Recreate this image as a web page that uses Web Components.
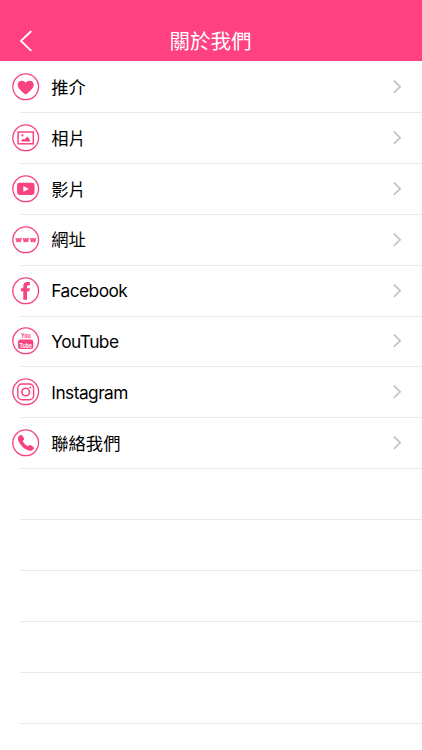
<!DOCTYPE html>
<html lang="zh-Hant">
<head>
<meta charset="utf-8">
<title>關於我們</title>
<style>
  body {
    margin: 0;
    background: #fff;
    font-family: Inter, "Noto Sans CJK TC", sans-serif;
  }
</style>
</head>
<body>
<about-page></about-page>

<script>
const ICONS = {
  heart: '<path fill="currentColor" d="M14 21.7C11.2 19.4 6 16.1 6 11.9C6 9.4 7.8 7.9 10 7.9C11.8 7.9 13.2 8.8 14 10.2C14.8 8.8 16.2 7.9 18 7.9C20.2 7.9 22 9.4 22 11.9C22 16.1 16.8 19.4 14 21.7Z"/>',
  photo: '<rect x="6.4" y="8.2" width="15.2" height="11.8" fill="none" stroke="currentColor" stroke-width="1.5"/><circle cx="10.8" cy="11.6" r="1.1" fill="currentColor"/><path fill="currentColor" d="M9.6 17.6V16.4L11.6 15L12.8 15.7L15.6 12.8L18.4 16.2V17.6Z"/>',
  video: '<rect x="5.4" y="7.9" width="17.4" height="12.2" rx="2.8" fill="currentColor"/><path fill="#fff" d="M11.7 11.2V17L17.2 14.1Z"/>',
  web: '<text x="3.9" y="16.1" font-family="DejaVu Sans, sans-serif" font-size="6.8" font-weight="700" letter-spacing=".9" stroke="currentColor" stroke-width=".35" fill="currentColor">www</text>',
  facebook: '<path fill="currentColor" d="M11.6 23V14.5H9.2V11.5H11.6V9.4C11.6 6.5 13.2 5.2 15.7 5.2H18.2V8.4H16.5C15.6 8.4 15.3 8.8 15.3 9.7V11.5H18.1L17.7 14.5H15.3V23Z"/>',
  youtube: '<g font-family="Liberation Sans, sans-serif" font-weight="700" font-size="7.9"><text transform="translate(9.3 11.6) scale(.68 1)" fill="currentColor">You</text><rect x="6.4" y="12.7" width="15.2" height="9.6" rx="2.4" fill="currentColor"/><text transform="translate(7.9 20.9) scale(.68 1)" fill="#fff">Tube</text></g>',
  instagram: '<g fill="none" stroke="currentColor" stroke-width="1.4"><rect x="6.1" y="6.2" width="15.8" height="15.8" rx="4.2"/><circle cx="14" cy="14.2" r="3.8" stroke-width="1.6"/></g><circle cx="18.6" cy="9.6" r="1" fill="currentColor"/>',
  phone: '<path fill="currentColor" d="M8.2 6.5C9.2 5.8 10.1 6.1 10.8 7L12.2 9.1C12.8 10.1 12.5 10.8 11.7 11.4C11.1 11.9 11 12.3 11.4 13C12.4 14.8 13.7 16.1 15.3 17C16 17.4 16.5 17.4 17 16.8C17.6 16 18.3 15.9 19.2 16.5L21.4 17.9C22.3 18.5 22.5 19.3 21.9 20.2C20.6 22.1 18.5 22.4 16.2 21.5C11.8 19.8 8.5 16.4 6.6 12C5.7 9.9 6.3 7.8 8.2 6.5Z"/>'
}

class NavBar extends HTMLElement {
  constructor () {
    super()
    this.attachShadow({ mode: 'open' }).innerHTML = /* html */`
      <style>
        :host {
          box-sizing: border-box;
          display: grid;
          grid-template-columns: 52px 1fr 53px;
          align-items: center;
          height: 61.4px;
          padding-top: 22px;
          background: #ff4081;
          color: #fff;
        }
        button {
          display: flex;
          padding: 0 0 2px 19px;
          border: 0;
          background: none;
          color: inherit;
        }
        h1 {
          margin: 0;
          text-align: center;
          font-size: 20.5px;
          font-weight: 400;
          line-height: 40px;
        }
      </style>
      <button aria-label="返回">
        <svg width="14" height="22" viewBox="0 0 14 22" fill="none" stroke="currentColor" stroke-width="1.8" stroke-linecap="round">
          <path d="M11.8 1.5L2 10.9L11.8 20.4"/>
        </svg>
      </button>
      <h1><slot></slot></h1>
    `
  }
}

class MenuIcon extends HTMLElement {
  connectedCallback () {
    this.attachShadow({ mode: 'open' }).innerHTML = /* html */`
      <style>
        :host { display: block; width: 28px; height: 28px; color: #f8437f; }
        svg { display: block; overflow: visible; }
      </style>
      <svg width="28" height="28" viewBox="0.3 0.2 28 28">
        <circle cx="14" cy="14" r="12.9" fill="none" stroke="currentColor" stroke-width="1.3"/>
        ${ICONS[this.getAttribute('name')]}
      </svg>
    `
  }
}

class MenuRow extends HTMLElement {
  connectedCallback () {
    const icon = this.getAttribute('icon')
    this.attachShadow({ mode: 'open' }).innerHTML = /* html */`
      <style>
        :host {
          box-sizing: border-box;
          display: flex;
          align-items: center;
          height: 50.92px;
          padding: 0 20px 1px 12px;
          color: #000;
          font-size: 17.3px;
          background: linear-gradient(#e9e9eb, #e9e9eb) 20px 100% / 100% 1px no-repeat;
        }
        .label { flex: 1; margin-left: 11.3px; padding-top: 1.6px; line-height: 28px; }
        :host([latin]) .label { padding-top: 1px; letter-spacing: -.53px; }
        .chevron { display: block; color: #c5c5ca; }
      </style>
      ${icon ? `
        <menu-icon name="${icon}"></menu-icon>
        <span class="label"><slot></slot></span>
        <svg class="chevron" width="10" height="16" viewBox="0 0 10 16" fill="none" stroke="currentColor" stroke-width="1.8">
          <path d="M1.8 1.5L8.1 7.7L1.8 13.9"/>
        </svg>` : ''}
    `
  }
}

class AboutPage extends HTMLElement {
  constructor () {
    super()
    this.items = [
      ['heart', '推介'],
      ['photo', '相片'],
      ['video', '影片'],
      ['web', '網址'],
      ['facebook', 'Facebook'],
      ['youtube', 'YouTube'],
      ['instagram', 'Instagram'],
      ['phone', '聯絡我們']
    ]
    this.attachShadow({ mode: 'open' })
  }

  connectedCallback () {
    this.shadowRoot.innerHTML = /* html */`
      <style>
        :host { display: block; height: 750px; overflow: hidden; }
        main { padding-top: .6px; }
      </style>
      <nav-bar>關於我們</nav-bar>
      <main>
        ${this.items.map(([icon, text]) => `<menu-row icon="${icon}"${/^[A-Z]/.test(text) ? ' latin' : ''}>${text}</menu-row>`).join('')}
        ${'<menu-row></menu-row>'.repeat(5)}
      </main>
    `
  }
}

customElements.define('nav-bar', NavBar)
customElements.define('menu-icon', MenuIcon)
customElements.define('menu-row', MenuRow)
customElements.define('about-page', AboutPage)
</script>
</body>
</html>
